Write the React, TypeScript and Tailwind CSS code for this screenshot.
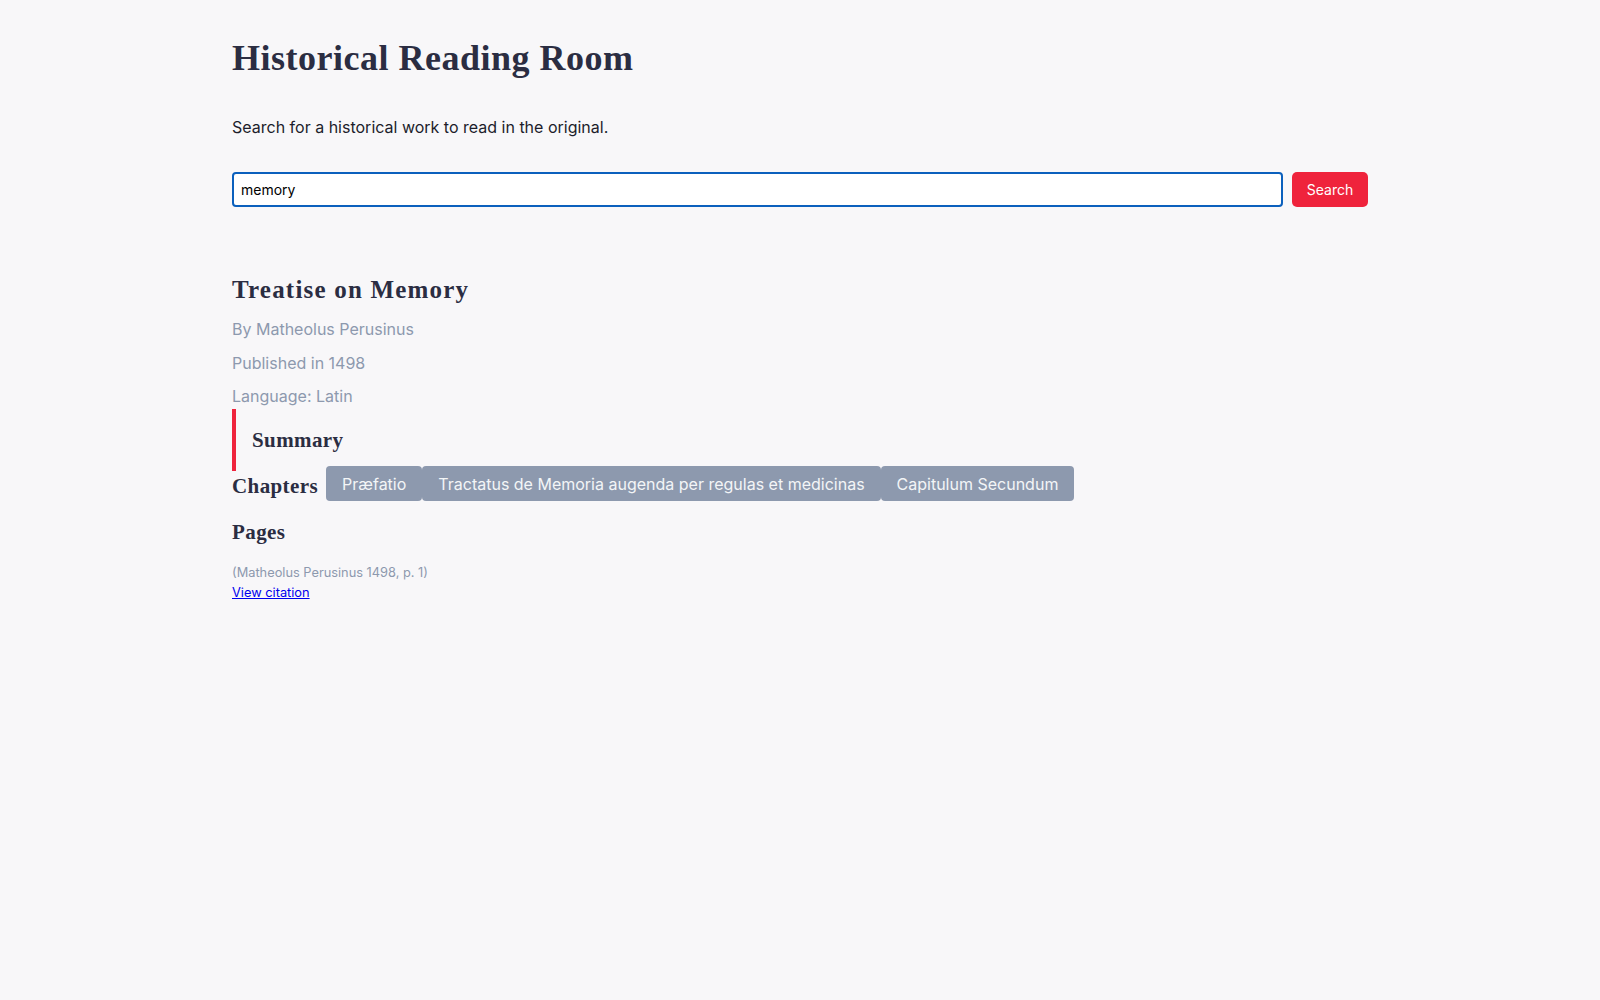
import React from "react";

const serif = { fontFamily: '"Liberation Serif", "DejaVu Serif", serif' };

export default function App() {
  const chapters = [
    "Præfatio",
    "Tractatus de Memoria augenda per regulas et medicinas",
    "Capitulum Secundum",
  ];
  return (
    <div
      className="min-h-[1000px] w-full bg-[#f8f7f9] text-[#2b2d42]"
      style={{ fontFamily: 'Inter, "Liberation Sans", sans-serif' }}
    >
      <div className="mx-auto w-[1136px] pt-[38px]">
        <h1 className="text-[36px] leading-[40px] font-bold tracking-[0.5px] text-[#2b2d42]" style={serif}>
          Historical Reading Room
        </h1>
        <p className="mt-[37px] text-[16px] leading-[24px] text-[#1c1d2b]">
          Search for a historical work to read in the original.
        </p>
        <div className="mt-[33px] flex gap-[9px]">
          <input
            readOnly
            value="memory"
            className="h-[35px] flex-1 rounded-[4px] border-2 border-[#0b60bd] bg-white px-[7px] text-[14px] text-black outline-none"
          />
          <button className="h-[35px] w-[76px] rounded-[5px] bg-[#ef233c] text-[14px] text-white">
            Search
          </button>
        </div>

        <h2 className="mt-[66px] text-[25px] leading-[33px] font-bold tracking-[1.2px] text-[#2b2d42]" style={serif}>
          Treatise on Memory
        </h2>
        <div className="mt-[9px] flex flex-col gap-[5.5px] text-[16px] leading-[28px] text-[#8d99ae]">
          <p>By Matheolus Perusinus</p>
          <p>Published in 1498</p>
          <p>Language: Latin</p>
        </div>
        <div className="mt-[-1px] flex h-[62px] items-center border-l-4 border-[#ef233c] pl-4">
          <h3 className="text-[21px] leading-[24px] font-bold tracking-[0.4px] text-[#2b2d42]" style={serif}>
            Summary
          </h3>
        </div>
        <div className="mt-[-5px] flex items-start gap-[8px]">
          <h3 className="mt-[8px] text-[21px] leading-[24px] font-bold tracking-[0.4px] text-[#2b2d42]" style={serif}>
            Chapters
          </h3>
          <div className="flex">
            {chapters.map((c) => (
              <button
                key={c}
                className="h-[35px] rounded-[4px] bg-[#8d99ae] px-4 text-[16px] text-[#f3f5f7]"
              >
                {c}
              </button>
            ))}
          </div>
        </div>
        <h3 className="mt-[19px] text-[21px] leading-[24px] font-bold tracking-[0.4px] text-[#2b2d42]" style={serif}>
          Pages
        </h3>
        <p className="mt-[19px] text-[12.8px] leading-[20px] text-[#8d99ae]">
          (Matheolus Perusinus 1498, p. 1)
        </p>
        <a href="#" className="block w-fit text-[12.8px] leading-[20px] text-[#0000ee] underline">
          View citation
        </a>
      </div>
    </div>
  );
}
